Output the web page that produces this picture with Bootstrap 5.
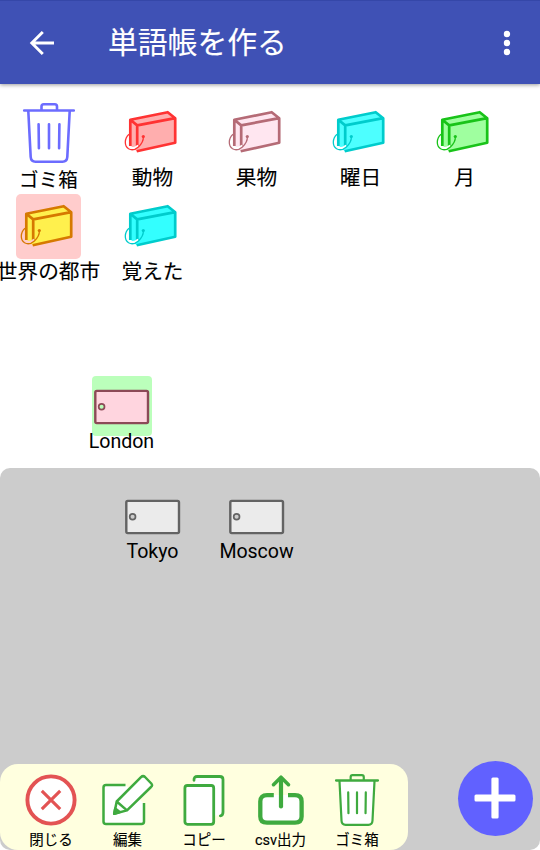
<!DOCTYPE html>
<html lang="ja">
<head>
<meta charset="utf-8">
<meta name="viewport" content="width=device-width, initial-scale=1">
<title>単語帳を作る</title>
<link href="https://cdn.jsdelivr.net/npm/bootstrap@5.3.0/dist/css/bootstrap.min.css" rel="stylesheet">
<style>
body{font-family:Roboto,"Noto Sans CJK JP",sans-serif;color:#000;background:#fff}
.screen{width:540px;height:850px}
.topbar{height:84px;background:#3f51b5;border-top:1px solid #3547a8;box-shadow:0 1px 4px rgba(0,0,0,.4);padding:0 21px 0 28px}
.topbar h1{font-size:29.8px;line-height:40px;margin-left:52px;font-weight:400;-webkit-text-stroke:.12px #fff}
.deck-area{height:291.5px;padding-top:16px}
.decks{display:grid;grid-template-columns:repeat(5,104px);grid-auto-rows:94px;margin-left:-3.5px}
.tile{width:65px;height:65px;border-radius:5px}
.name{font-size:20.7px;line-height:26px;white-space:nowrap;-webkit-text-stroke:.12px #000}
.bin-tile{padding-top:3px}
.bin-name{font-size:19.6px;margin-top:3px}
.held{height:92px;padding-left:69.5px}
.slot{width:104px}
.tile-sm{width:60px;height:60px;border-radius:4px}
.word{font-size:19.6px;line-height:24px;margin-top:-6px;letter-spacing:-.05px;white-space:nowrap}
.picked{background:#ffcccc}
.lifted{background:#bbffbb}
.tray{background:#ccc;border-radius:10px}
.tray-words{padding:18.5px 0 0 100.5px}
.tools{width:408px;height:86.5px;background:#ffffdf;border-radius:18px;padding:10px 0 0 12.75px}
.tool{width:76.5px;color:#3faa3f}
.tool span{font-size:14.5px;line-height:18px;margin-top:6px;color:#000;white-space:nowrap;-webkit-text-stroke:.12px #000}
.fab{width:75px;height:75px;background:#6161ff;margin:-3px 7.5px 0 0}
svg{display:block;overflow:visible}
</style>
<script src="https://cdn.jsdelivr.net/npm/bootstrap@5.3.0/dist/js/bootstrap.bundle.min.js"></script>
</head>
<body>
<svg width="0" height="0" class="position-absolute" aria-hidden="true">
  <symbol id="box" viewBox="0 0 65 65" overflow="visible">
    <path d="M10.300 19.800 47.700 12.200 55.200 18.200V42.700L16.700 51.300 10.300 45.500Z" fill="var(--f)"/>
    <path d="M10.300 46V19.800L47.700 12.200 55.200 18.200V42.700L16.700 51.300M10.300 19.800 17.200 25.400 55.200 18.200M17.200 25.400V46" fill="none" stroke="currentColor" stroke-width="2.700" stroke-linejoin="round"/>
    <path d="M10 47.200C12 48.800 15.500 48.200 18.300 45.600" fill="none" stroke="var(--bg,#fff)" stroke-width="2.400"/>
    <path d="M9 34.300C4.300 38.500 4 46 8.600 48.800 15 52.500 23.500 44 23.400 36.800" fill="none" stroke="currentColor" stroke-width="1.300"/>
    <circle cx="23.300" cy="36.500" r="1.600" fill="currentColor"/>
  </symbol>
  <symbol id="bin" viewBox="0 0 52 60" overflow="visible">
    <path d="M5 8 7.700 54Q8 58.700 12.500 58.700H39.500Q44 58.700 44.300 54L47 8Z" fill="#fff"/>
    <path d="M1.200 7.500H50.800M18.500 7V3.500Q18.500 1.300 20.700 1.300H31.800Q34 1.300 34 3.500V7M5.300 8 7.700 54Q8 58.700 12.500 58.700H39.500Q44 58.700 44.300 54L46.700 8M15.600 21.300 15.900 45.200M26 21.300V45.200M36.400 21.300 36.100 45.200" fill="none" stroke="currentColor" stroke-width="2.600" stroke-linecap="round"/>
  </symbol>
  <symbol id="tag" viewBox="0 0 60 60">
    <path fill-rule="evenodd" d="M3.200 15H56V47H3.200ZM6.700 30.700a2.800 2.800 0 1 0 5.600 0a2.800 2.800 0 1 0-5.600 0Z" fill="var(--f)"/>
    <rect x="3.300" y="14.900" width="52.700" height="32.200" rx="1.500" fill="none" stroke="currentColor" stroke-width="2.400"/>
    <circle cx="9.600" cy="30.700" r="2.900" fill="none" stroke="currentColor" stroke-width="1.700"/>
  </symbol>
</svg>

<div class="screen d-flex flex-column overflow-hidden">
  <header class="topbar d-flex align-items-center text-white flex-shrink-0 position-relative">
    <svg width="28" height="28" viewBox="0 0 28 28"><path d="M26 14H4M14.800 3 3.800 14 14.800 25" fill="none" stroke="#fff" stroke-width="2.900"/></svg>
    <h1 class="mb-0">単語帳を作る</h1>
    <svg class="ms-auto" width="24" height="28" viewBox="0 0 24 28" fill="#fff"><circle cx="12" cy="5" r="3.200"/><circle cx="12" cy="14" r="3.200"/><circle cx="12" cy="23" r="3.200"/></svg>
  </header>

  <section class="deck-area flex-shrink-0">
    <div class="decks">
      <div class="d-flex flex-column align-items-center">
        <div class="tile bin-tile d-flex justify-content-center align-items-start"><svg width="52" height="60" color="#6c6cff"><use href="#bin"/></svg></div><div class="name bin-name">ゴミ箱</div></div>
      <div class="d-flex flex-column align-items-center">
        <svg class="tile" color="#ff3333" style="--f:#ffaeae"><use href="#box"/></svg><div class="name">動物</div></div>
      <div class="d-flex flex-column align-items-center">
        <svg class="tile" color="#b56b76" style="--f:#ffe6f0"><use href="#box"/></svg><div class="name">果物</div></div>
      <div class="d-flex flex-column align-items-center">
        <svg class="tile" color="#00cccc" style="--f:#4dffff"><use href="#box"/></svg><div class="name">曜日</div></div>
      <div class="d-flex flex-column align-items-center">
        <svg class="tile" color="#19c319" style="--f:#9fff9f"><use href="#box"/></svg><div class="name">月</div></div>
      <div class="d-flex flex-column align-items-center">
        <svg class="tile picked" color="#d67900" style="--f:#fff04d;--bg:#ffcccc"><use href="#box"/></svg><div class="name">世界の都市</div></div>
      <div class="d-flex flex-column align-items-center">
        <svg class="tile" color="#00cccc" style="--f:#33ffff"><use href="#box"/></svg><div class="name">覚えた</div></div>
    </div>
  </section>

  <section class="held d-flex flex-shrink-0">
    <div class="slot d-flex flex-column align-items-center">
      <svg class="tile-sm lifted" color="#8c4a57" style="--f:#ffd5df"><use href="#tag"/></svg><div class="word">London</div></div>
  </section>

  <section class="tray d-flex flex-column justify-content-between flex-grow-1">
    <div class="tray-words d-flex">
      <div class="slot d-flex flex-column align-items-center">
        <svg class="tile-sm" color="#636363" style="--f:#ebebeb"><use href="#tag"/></svg><div class="word">Tokyo</div></div>
      <div class="slot d-flex flex-column align-items-center">
        <svg class="tile-sm" color="#636363" style="--f:#ebebeb"><use href="#tag"/></svg><div class="word">Moscow</div></div>
    </div>
    <div class="d-flex justify-content-between align-items-start">
      <nav class="tools d-flex">
        <div class="tool d-flex flex-column align-items-center">
          <svg width="52" height="52" viewBox="0 0 52 52" fill="none" stroke="#e35353"><circle cx="26" cy="26" r="23.600" fill="#fff" stroke-width="3.900"/><path d="M16.800 16.800 35.200 35.200M35.200 16.800 16.800 35.200" stroke-width="3.100"/></svg><span>閉じる</span></div>
        <div class="tool d-flex flex-column align-items-center">
          <svg width="52" height="52" viewBox=".5 0 52 52" fill="none" stroke="currentColor" stroke-width="2.500" stroke-linejoin="round"><path d="M24 11H5Q2 11 2 14V47.500Q2 50 4.500 50H40Q42.500 50 42.500 47.500V30L24 11Z" fill="#fff" stroke="none"/><path d="M24 11H4.500Q2 11 2 13.500V47.500Q2 50 4.500 50H40Q42.500 50 42.500 47.500V29"/><path d="M12.700 39.800 15.200 27.500 39.500 3.200Q41.500 1.200 43.500 3L49.800 9.500Q51.500 11.500 49.500 13L25.500 36.400ZM15.200 27.500 25.500 36.400" fill="#fff"/><path d="M12.700 39.800 13.700 34.600 18.200 38Z" fill="currentColor"/></svg><span>編集</span></div>
        <div class="tool d-flex flex-column align-items-center">
          <svg width="52" height="52" viewBox="-4.500 0 52 52" fill="none" stroke="currentColor" stroke-width="2.800" stroke-linecap="round"><path d="M12 11V5Q12 2.500 15 2.500H37Q40 2.500 40 5.500V38Q40 41.500 37 41.500H30Z" fill="#fff" stroke="none"/><path d="M11.500 6.300Q11.300 2.500 14.800 2.500H37.300Q40.500 2.500 40.500 5.500V38Q40.500 41.700 37.800 41.800"/><rect x="2.400" y="11.500" width="28.800" height="38.800" rx="2.500" fill="#fff"/></svg><span>コピー</span></div>
        <div class="tool d-flex flex-column align-items-center">
          <svg width="52" height="52" viewBox="0 0 52 52" fill="none" stroke="currentColor"><rect x="5.200" y="21" width="42" height="28" rx="5" fill="#fff" stroke="none"/><path d="M18.800 21.200H12Q5.300 21.200 5.300 27.500V42.500Q5.300 48.700 12 48.700H40Q46.600 48.700 46.600 42.500V27.500Q46.600 21.200 40 21.200H33" stroke-width="4.300"/><path d="M26 32.500V5" stroke-width="4.200" stroke-linecap="round"/><path d="M18.500 10.700 26 3.200 33.500 10.700" stroke-width="3.600" stroke-linecap="round" stroke-linejoin="round"/></svg><span>csv出力</span></div>
        <div class="tool d-flex flex-column align-items-center">
          <svg width="44" height="52" viewBox="0 0 52 60" preserveAspectRatio="none"><use href="#bin" width="52" height="60"/></svg><span>ゴミ箱</span></div>
      </nav>
      <div class="fab rounded-circle d-flex align-items-center justify-content-center">
        <svg width="42" height="42" viewBox="0 0 42 42" fill="#fff"><rect x="17.400" y=".5" width="7.200" height="41" rx="1.500"/><rect x=".5" y="17.400" width="41" height="7.200" rx="1.500"/></svg>
      </div>
    </div>
  </section>
</div>
</body>
</html>
